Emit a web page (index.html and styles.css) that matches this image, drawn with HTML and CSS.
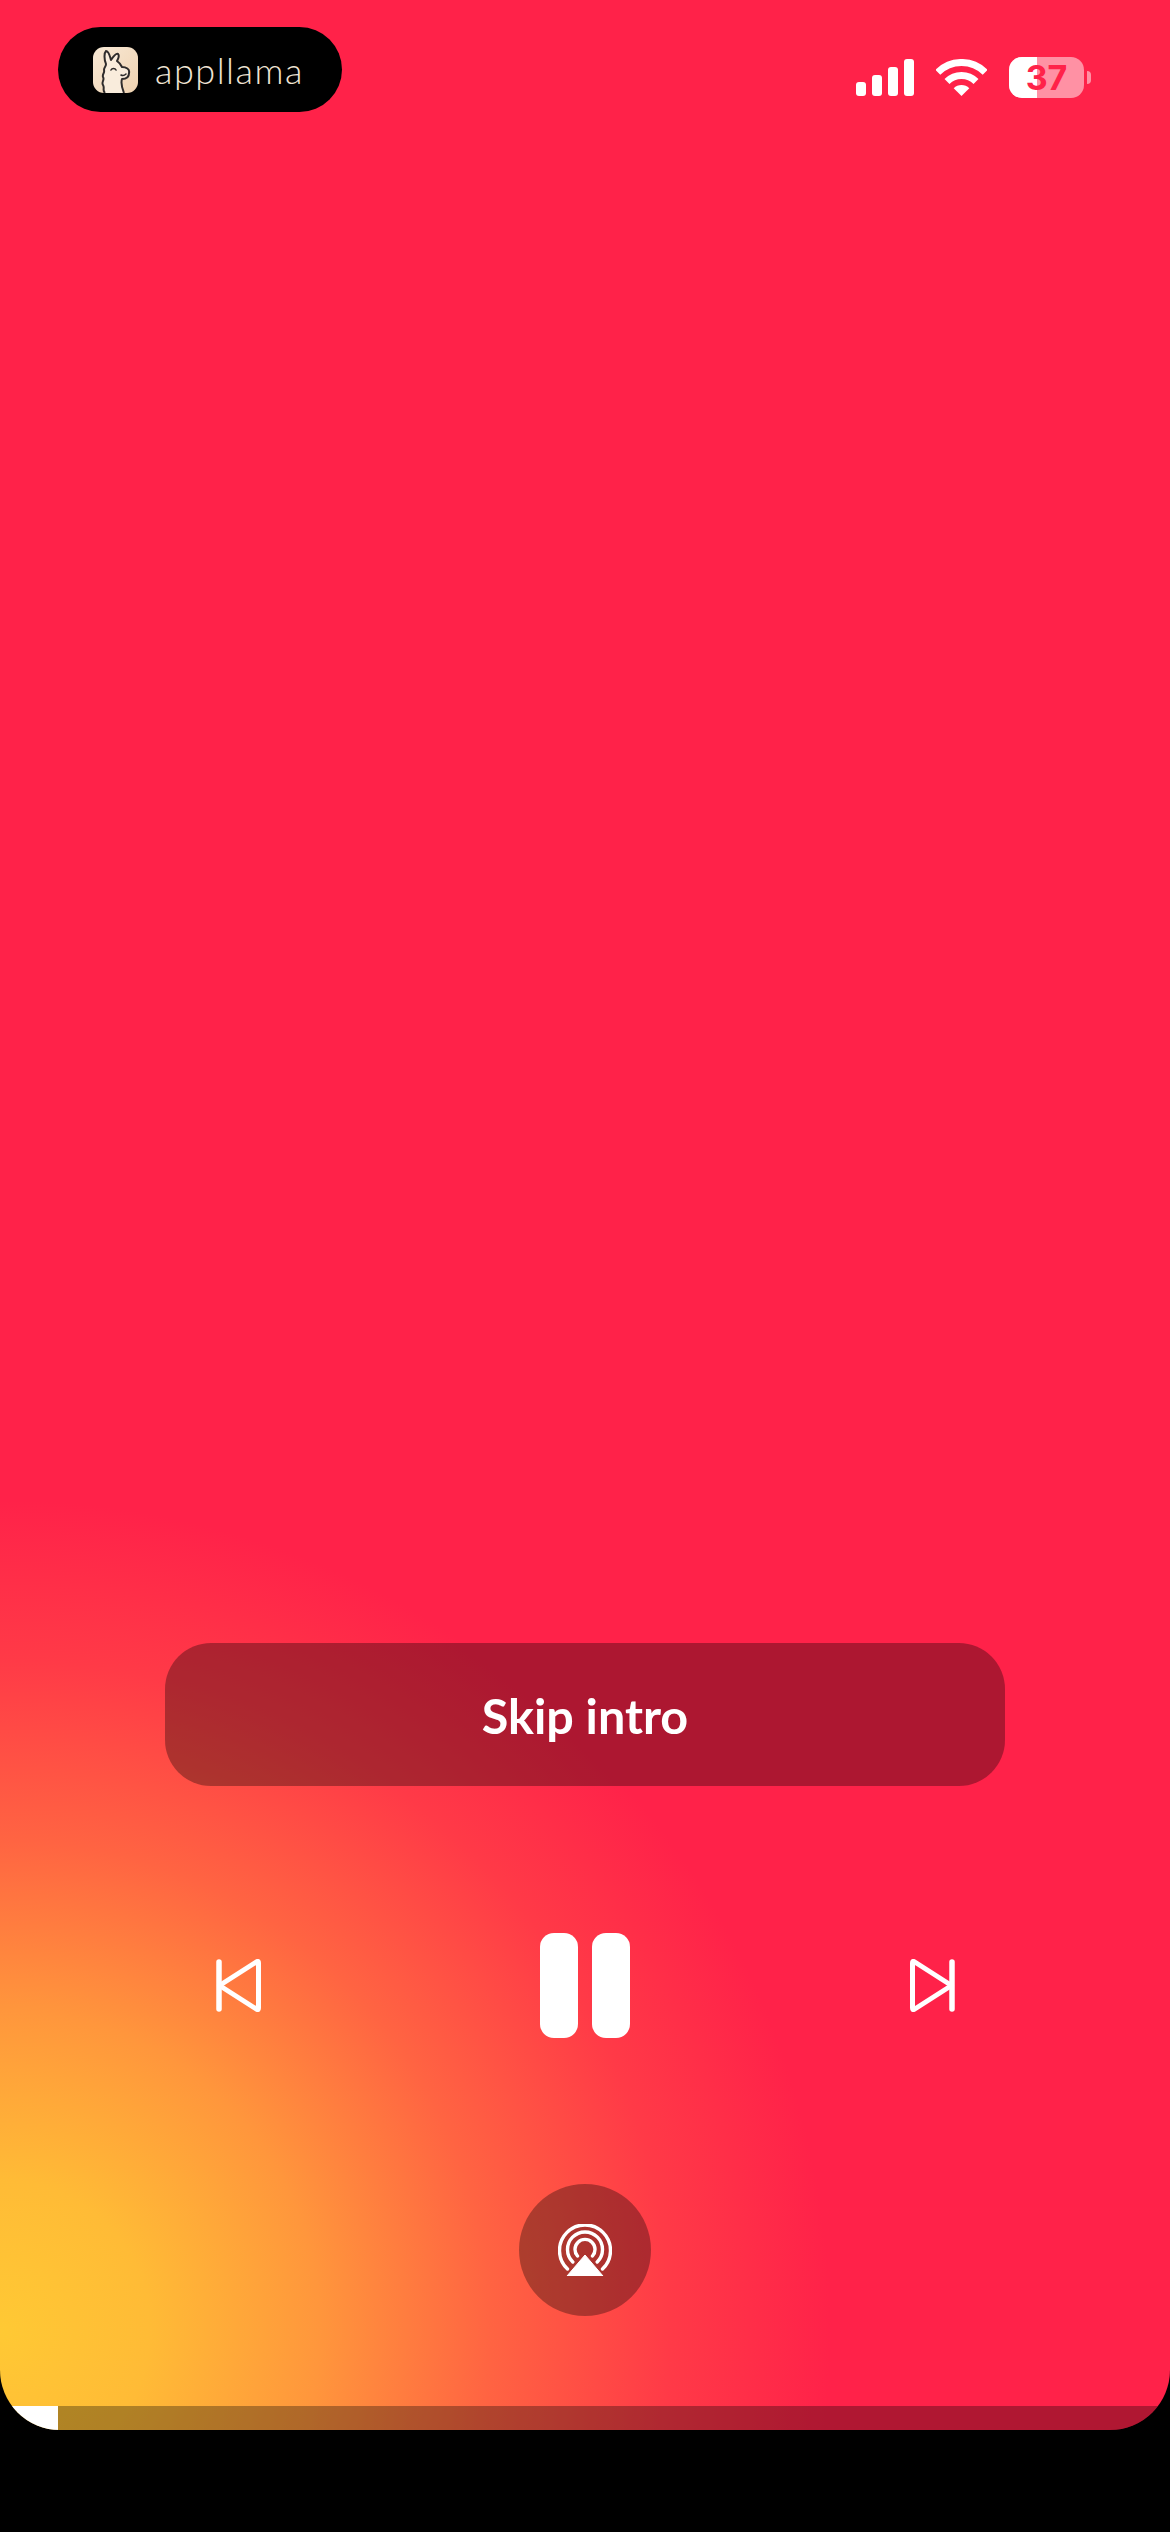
FILE: index.html
```html
<!DOCTYPE html>
<html lang="en">
<head>
    <meta charset="UTF-8">
    <meta name="viewport" content="width=device-width, initial-scale=1.0">
    <title>Player</title>
    <link rel="stylesheet" href="styles.css">
</head>
<body>
    <div class="screen">
        <!-- Status bar -->
        <div class="top-bar">
            <div class="brand-pill">
                <svg class="brand-icon" viewBox="0 0 45 46">
                    <defs>
                        <linearGradient id="icon-bg" x1="0" y1="0" x2="1" y2="1">
                            <stop offset="0" stop-color="#f8e9d6"/>
                            <stop offset="1" stop-color="#efd2b0"/>
                        </linearGradient>
                    </defs>
                    <rect width="45" height="46" rx="11" fill="url(#icon-bg)"/>
                    <path d="M12 46C9 43 12 41 10 38C8 35 12 33 10 30C9 27 12 26 11 23C11 20 13 20 13 17C11 12 11 6 13 4C16 4 17 10 18 13C20 10 23 6 25 7C27 9 25 12 24 14C27 16 28 18 29 20C33 20 37 22 36 26C36 30 33 32 29 32C28 35 29 41 31 46" fill="#f9ecdc" stroke="#2f2c2c" stroke-width="2" stroke-linejoin="round"/>
                    <path d="M18 23C19 21 22 21 23 23M28 28C30 29 32 28 33 27" fill="none" stroke="#2f2c2c" stroke-width="1.6" stroke-linecap="round"/>
                </svg>
                <span class="brand-name">appllama</span>
            </div>
            <div class="status-icons">
                <div class="signal">
                    <span class="bar bar-1"></span>
                    <span class="bar bar-2"></span>
                    <span class="bar bar-3"></span>
                    <span class="bar bar-4"></span>
                </div>
                <svg class="wifi" viewBox="0 0 51 37">
                    <path d="M1.8 13.3A33.5 33.5 0 0 1 49.2 13.3M11.0 22.5A20.5 20.5 0 0 1 40 22.5" fill="none" stroke="#fff" stroke-width="7"/>
                    <path d="M25.5 37L17.7 29.2A11 11 0 0 1 33.3 29.2Z" fill="#fff"/>
                </svg>
                <div class="battery">
                    <div class="battery-body">
                        <div class="battery-fill"></div>
                        <span class="battery-level">37</span>
                    </div>
                    <div class="battery-nub"></div>
                </div>
            </div>
        </div>

        <!-- Player controls -->
        <div class="main-content">
            <div class="skip-btn">Skip intro</div>

            <div class="controls">
                <svg class="track-icon" viewBox="0 0 45 53">
                    <path d="M3 3V50" fill="none" stroke="#fff" stroke-width="5.500" stroke-linecap="round"/>
                    <path d="M3.5 26.5L41 2.5Q42.5 2 42.5 4V49Q42.5 51 41 50.5Z" fill="none" stroke="#fff" stroke-width="5" stroke-linejoin="round"/>
                </svg>
                <div class="pause">
                    <span class="pause-bar"></span>
                    <span class="pause-bar"></span>
                </div>
                <svg class="track-icon" viewBox="0 0 45 53">
                    <path d="M42 3V50" fill="none" stroke="#fff" stroke-width="5.500" stroke-linecap="round"/>
                    <path d="M41.5 26.5L4 2.5Q2.5 2 2.5 4V49Q2.5 51 4 50.5Z" fill="none" stroke="#fff" stroke-width="5" stroke-linejoin="round"/>
                </svg>
            </div>

            <div class="airplay-btn">
                <svg class="airplay-icon" viewBox="0 0 54 52">
                    <path d="M9.5 45A25.5 25.5 0 1 1 44.500 45M14.800 38A17.500 17.500 0 1 1 39.200 38M19.500 32A10 10 0 1 1 34.500 32" fill="none" stroke="#fff" stroke-width="3.400" stroke-linecap="round"/>
                    <path d="M27 31L45 52H9Z" fill="#fff" stroke="#fff" stroke-width="1" stroke-linejoin="round"/>
                </svg>
            </div>
        </div>

        <!-- Progress -->
        <div class="progress">
            <div class="progress-done"></div>
        </div>
    </div>
</body>
</html>
```

FILE: styles.css
```css
body {
    margin: 0;
    background-color: #000;
}

.screen {
    height: 2430px;
    display: flex;
    flex-direction: column;
    overflow: hidden;
    border-radius: 0 0 60px 60px;
    background-color: #ff2249;
    background-image: radial-gradient(circle 830px at 0 2330px, #ffc934 0, #ffbb36 150px, #ff963c 320px, #ff6442 490px, #ff3a47 670px, #ff2249 830px);
}

/* Status bar */
.top-bar {
    display: flex;
    justify-content: space-between;
    align-items: flex-start;
    padding: 27px 79px 0 58px;
}

.brand-pill {
    display: flex;
    align-items: center;
    gap: 17px;
    width: 284px;
    height: 85px;
    box-sizing: border-box;
    padding: 0 0 0 35px;
    border-radius: 43px;
    background-color: #000;
}

.brand-icon {
    width: 45px;
    height: 46px;
}

.brand-name {
    font-family: "Lato", sans-serif;
    font-weight: 300;
    font-size: 36px;
    letter-spacing: 1.500px;
    color: #f0e4d4;
}

.status-icons {
    display: flex;
    align-items: center;
    margin-top: 30px;
}

.signal {
    display: flex;
    align-items: flex-end;
    gap: 6px;
    height: 37px;
    margin-right: 22px;
}

.bar {
    width: 10px;
    border-radius: 3px;
    background-color: #fff;
}

.bar-1 { height: 14px; }
.bar-2 { height: 21px; }
.bar-3 { height: 29px; }
.bar-4 { height: 37px; }

.wifi {
    width: 51px;
    height: 37px;
    margin-right: 22px;
}

.battery {
    display: flex;
    align-items: center;
    gap: 3px;
}

.battery-body {
    position: relative;
    display: flex;
    align-items: center;
    justify-content: center;
    width: 75px;
    height: 41px;
    overflow: hidden;
    border-radius: 13px;
    background-color: rgba(255, 255, 255, 0.5);
}

.battery-fill {
    position: absolute;
    top: 0;
    left: 0;
    bottom: 0;
    width: 28px;
    background-color: #fff;
}

.battery-level {
    position: relative;
    font-family: "Inter", sans-serif;
    font-weight: 700;
    font-size: 34px;
    color: #ff2249;
}

.battery-nub {
    width: 4px;
    height: 13px;
    border-radius: 0 4px 4px 0;
    background-color: rgba(255, 255, 255, 0.5);
}

/* Player controls */
.main-content {
    flex: 1;
    display: flex;
    flex-direction: column;
    justify-content: flex-end;
    align-items: center;
    padding-bottom: 90px;
}

.skip-btn {
    display: flex;
    align-items: center;
    justify-content: center;
    width: 840px;
    height: 143px;
    border-radius: 46px;
    background-color: rgba(0, 0, 0, 0.32);
    font-family: "Lato", sans-serif;
    font-weight: 700;
    font-size: 48.500px;
    color: #fff;
}

.controls {
    display: flex;
    justify-content: space-between;
    align-items: center;
    width: 739px;
    margin-top: 147px;
}

.track-icon {
    width: 45px;
    height: 53px;
}

.pause {
    display: flex;
    gap: 14px;
}

.pause-bar {
    width: 38px;
    height: 105px;
    border-radius: 14px;
    background-color: #fff;
}

.airplay-btn {
    display: flex;
    align-items: center;
    justify-content: center;
    width: 132px;
    height: 132px;
    margin-top: 146px;
    border-radius: 50%;
    background-color: rgba(0, 0, 0, 0.32);
}

.airplay-icon {
    width: 54px;
    height: 52px;
}

/* Progress */
.progress {
    height: 24px;
    background-color: rgba(0, 0, 0, 0.31);
}

.progress-done {
    width: 58px;
    height: 100%;
    background-color: #fff;
}
```
